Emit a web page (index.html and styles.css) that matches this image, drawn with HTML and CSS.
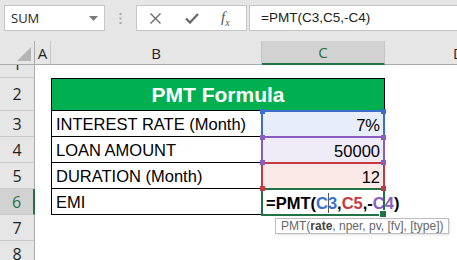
FILE: index.html
```html
<!DOCTYPE html>
<html lang="en">
<head>
  <meta charset="UTF-8">
  <title>PMT Formula</title>
  <link rel="stylesheet" href="styles.css">
</head>
<body>
  <div class="topbar">
    <div class="namebox">
      <span>SUM</span>
      <svg width="9" height="5" viewBox="0 0 9 5"><polygon points="0,0 9,0 4.5,5" fill="#7a7a7a"/></svg>
    </div>
    <div class="grip">
      <svg width="3" height="11" viewBox="0 0 3 11">
        <rect x="0.5" y="0" width="2" height="2" fill="#a8a8a8"/>
        <rect x="0.5" y="4.5" width="2" height="2" fill="#a8a8a8"/>
        <rect x="0.5" y="9" width="2" height="2" fill="#a8a8a8"/>
      </svg>
    </div>
    <div class="fx-buttons">
      <svg class="icon-cancel" width="11" height="11" viewBox="0 0 11 11">
        <path d="M0.5 0.5 L10.5 10.5 M10.5 0.5 L0.5 10.5" stroke="#6b6b6b" stroke-width="1.4"/>
      </svg>
      <svg class="icon-enter" width="14" height="11" viewBox="0 0 14 11">
        <path d="M1 5.5 L5 9.5 L13 1" stroke="#6b6b6b" stroke-width="2.3" fill="none"/>
      </svg>
      <span class="fx"><i>f</i><sub>x</sub></span>
    </div>
    <div class="formula-input">=PMT(C3,C5,-C4)</div>
  </div>

  <div class="sheet">
    <div class="corner">
      <svg width="14" height="14" viewBox="0 0 14 14"><polygon points="14,0 14,14 0,14" fill="#b5b5b5"/></svg>
    </div>
    <div class="col-head">A</div>
    <div class="col-head">B</div>
    <div class="col-head selected">C</div>
    <div class="col-head">D</div>

    <div class="row-head short"><span>1</span></div>
    <div></div><div></div><div></div><div></div>

    <div class="row-head">2</div>
    <div></div>
    <div class="title">PMT Formula</div>
    <div></div>

    <div class="row-head">3</div>
    <div></div>
    <div class="label">INTEREST RATE (Month)</div>
    <div class="value ref-blue">7%
      <div class="range blue"><i class="handle tl"></i><i class="handle tr"></i></div>
    </div>
    <div></div>

    <div class="row-head">4</div>
    <div></div>
    <div class="label">LOAN AMOUNT</div>
    <div class="value ref-purple">50000
      <div class="range purple"><i class="handle tl"></i><i class="handle tr"></i><i class="handle bl"></i><i class="handle br"></i></div>
    </div>
    <div></div>

    <div class="row-head">5</div>
    <div></div>
    <div class="label">DURATION (Month)</div>
    <div class="value ref-red">12
      <div class="range red"><i class="handle bl"></i><i class="handle br"></i></div>
    </div>
    <div></div>

    <div class="row-head selected">6</div>
    <div></div>
    <div class="label">EMI</div>
    <div class="formula-cell">
      <div class="range green"><i class="handle br"></i></div>
      <span class="formula">=PMT(<span class="c-blue">C<span class="caret"></span>3</span>,<span class="c-red">C5</span>,-<span class="c-purple">C4</span>)</span>
      <div class="tooltip">PMT(<b>rate</b>, nper, pv, [fv], [type])</div>
    </div>
    <div></div>

    <div class="row-head">7</div>
    <div></div><div></div><div></div><div></div>

    <div class="row-head">8</div>
    <div></div><div></div><div></div><div></div>
  </div>
</body>
</html>
```

FILE: styles.css
```css
* {
  box-sizing: border-box;
}

body {
  margin: 0;
  width: 457px;
  height: 260px;
  overflow: hidden;
  background: #FFFFFF;
  font-family: 'Liberation Sans', Arial, sans-serif;
  color: #000000;
}

/* formula bar */

.topbar {
  height: 41px;
  background: #E6E6E6;
  display: flex;
  align-items: flex-start;
  padding: 5px 0 0 4px;
}

.namebox {
  width: 101px;
  height: 26px;
  background: #FFFFFF;
  border: 1px solid #C6C6C6;
  display: flex;
  align-items: center;
  justify-content: space-between;
  padding: 0 6px 0 6px;
  font-family: 'Open Sans', sans-serif;
  font-size: 13px;
  color: #262626;
}

.grip {
  width: 31px;
  height: 26px;
  display: flex;
  align-items: center;
  justify-content: center;
}

.fx-buttons {
  width: 111px;
  height: 26px;
  background: #FFFFFF;
  border: 1px solid #C6C6C6;
  display: flex;
  align-items: center;
}

.icon-cancel {
  margin-left: 13px;
}

.icon-enter {
  margin-left: 24px;
}

.fx {
  margin-left: 22px;
  font-family: 'Liberation Serif', serif;
  font-size: 15px;
  color: #555555;
}

.fx sub {
  font-size: 10px;
  font-style: italic;
}

.formula-input {
  flex: 1;
  margin: 0 -6px 0 2px;
  height: 26px;
  background: #FFFFFF;
  border: 1px solid #C6C6C6;
  padding-left: 11px;
  font-size: 13.5px;
  line-height: 24px;
  color: #222222;
}

/* sheet */

.sheet {
  display: grid;
  grid-template-columns: 35px 16px 211px 123px 148px;
  grid-template-rows: 24px 13px 33px repeat(6, 26px);
}

.corner {
  background: #E6E6E6;
  border-right: 1px solid #ABABAB;
  border-bottom: 1px solid #ABABAB;
  display: flex;
  align-items: flex-end;
  justify-content: flex-end;
  padding: 0 3px 3px 0;
}

.col-head {
  background: #E6E6E6;
  border-right: 1px solid #C4C4C4;
  border-bottom: 1px solid #ABABAB;
  display: flex;
  align-items: center;
  justify-content: center;
  font-family: 'Open Sans', sans-serif;
  font-size: 15px;
  color: #1F1F1F;
}

.col-head.selected {
  background: #D2D2D2;
  border-bottom: 2px solid #217346;
  color: #217346;
}

.row-head {
  background: #E6E6E6;
  border-right: 1px solid #ABABAB;
  border-bottom: 1px solid #C8C8C8;
  display: flex;
  align-items: center;
  justify-content: center;
  font-family: 'Open Sans', sans-serif;
  font-size: 16px;
  color: #1F1F1F;
}

.row-head.short {
  align-items: flex-end;
  overflow: hidden;
}

.row-head.short span {
  line-height: 26px;
}

.row-head.selected {
  background: #D2D2D2;
  border-right: 2px solid #217346;
  color: #217346;
}

/* table */

.title {
  grid-column: span 2;
  background: #00B050;
  border: 1px solid #000000;
  color: #FFFFFF;
  font-weight: bold;
  font-size: 21px;
  display: flex;
  align-items: center;
  justify-content: center;
}

.label {
  border: 1px solid #000000;
  border-top: none;
  display: flex;
  align-items: flex-end;
  padding: 0 0 2px 4px;
  font-size: 16.5px;
  white-space: nowrap;
}

.value {
  position: relative;
  display: flex;
  align-items: flex-end;
  justify-content: flex-end;
  padding: 0 5px 2px 0;
  font-size: 16.5px;
}

.ref-blue { background: #E7EEF9; }
.ref-purple { background: #F0ECF7; }
.ref-red { background: #FBE9E8; }

.range {
  position: absolute;
  top: -1px;
  right: 0;
  bottom: -1px;
  left: -1px;
  border: 2px solid;
}

.range.blue { border-color: #3C6FCB; color: #3C6FCB; }
.range.purple { border-color: #8A5EC0; color: #8A5EC0; }
.range.red { border-color: #C43A40; color: #C43A40; }
.range.green { border-color: #217346; color: #217346; }

.handle {
  position: absolute;
  width: 5px;
  height: 5px;
  background: currentColor;
  z-index: 2;
}

.handle.tl { top: -3px; left: -3px; }
.handle.tr { top: -3px; right: -3px; }
.handle.bl { bottom: -3px; left: -3px; }
.handle.br { bottom: -3px; right: -3px; }

.range.green .handle.br {
  width: 6px;
  height: 6px;
  outline: 1px solid #FFFFFF;
}

.formula-cell {
  position: relative;
  display: flex;
  align-items: flex-end;
  padding: 0 0 2px 4px;
  font-size: 16.5px;
  font-weight: bold;
  white-space: nowrap;
}

.c-blue { color: #3C6FCB; }
.c-red { color: #C43A40; }
.c-purple { color: #8A5EC0; }

.caret {
  display: inline-block;
  width: 0;
  height: 20px;
  border-left: 1px solid #555555;
  margin-right: -1px;
  vertical-align: -4px;
}

.tooltip {
  position: absolute;
  left: 13px;
  top: 29px;
  height: 16px;
  padding: 0 4px 0 5px;
  background: #FFFFFF;
  border: 1px solid #BDBDBD;
  box-shadow: 1px 1px 2px rgba(0, 0, 0, 0.12);
  font-size: 12px;
  font-weight: normal;
  line-height: 14px;
  color: #666666;
  z-index: 3;
}

.tooltip b {
  color: #444444;
}
```
